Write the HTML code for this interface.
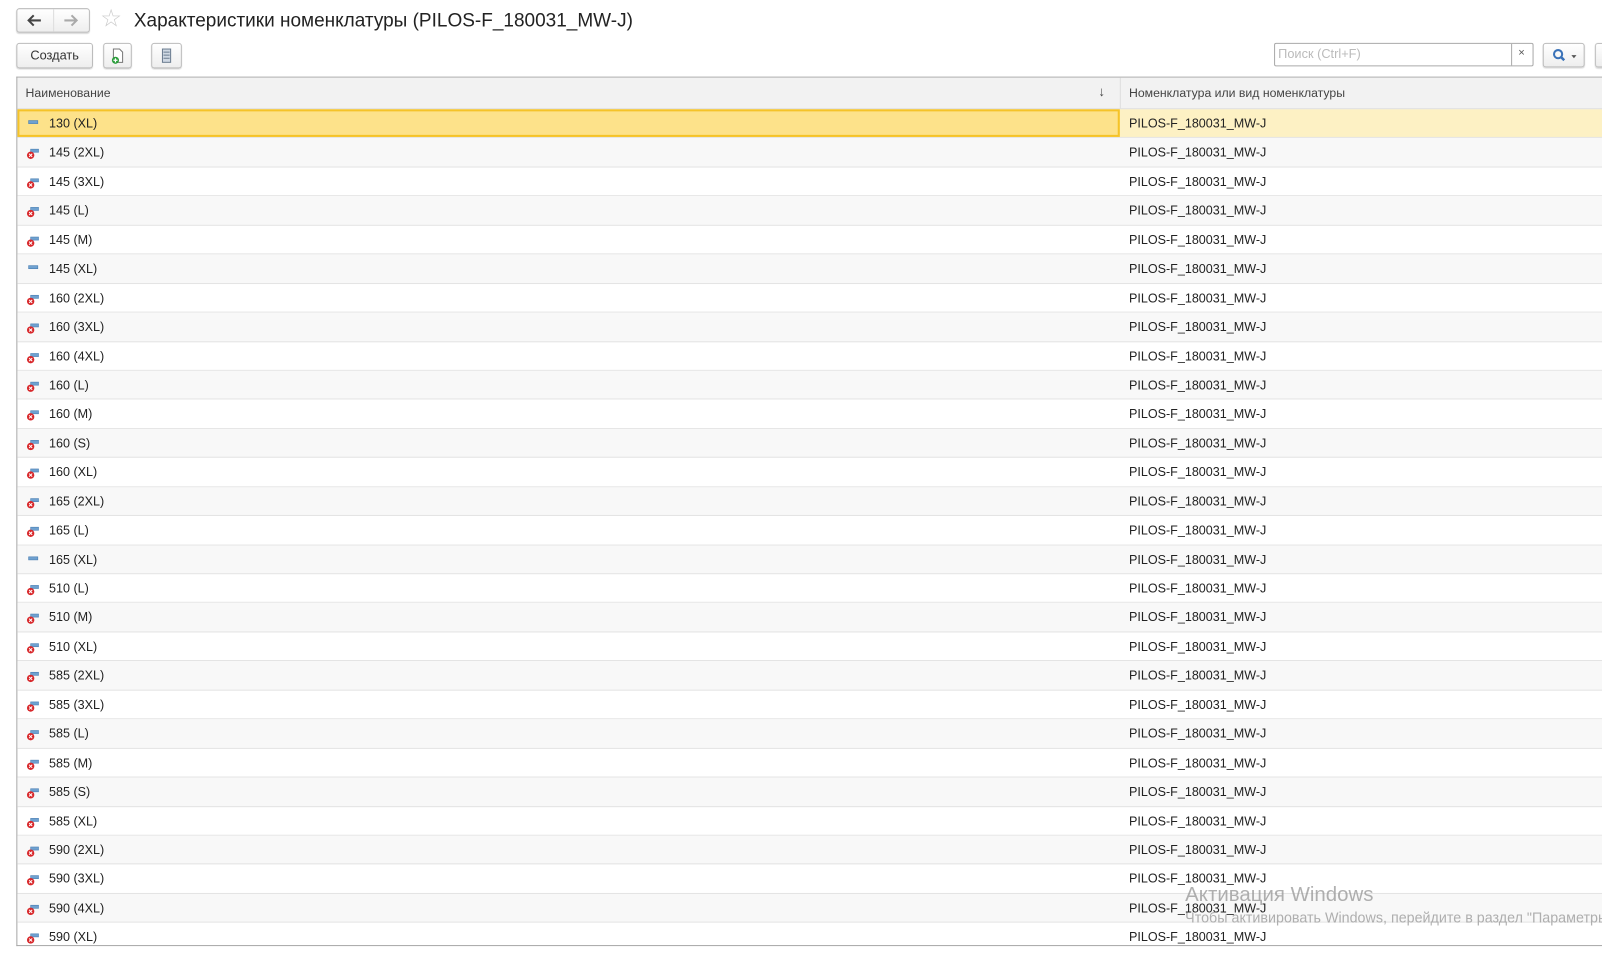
<!DOCTYPE html>
<html><head><meta charset="utf-8"><style>
body{margin:0;width:1602px;height:956px;background:#fff;font-family:"Liberation Sans",Arial,sans-serif;position:relative;overflow:hidden;color:#333}
#wrap{position:absolute;left:0;top:0;width:1568px;height:936px;transform:scale(1.0217);transform-origin:0 0}
.abs{position:absolute}
.btn{position:absolute;border:1px solid #bbb;border-radius:3px;background:linear-gradient(#fff,#eee);box-shadow:0 1px 1px rgba(0,0,0,.15);box-sizing:border-box}
.table{position:absolute;left:16px;top:75px;width:1560px;height:849px;border:1px solid #a8a8a8;border-right:none;overflow:hidden}
.hdr{height:30px;background:#f2f2f2;border-bottom:1px solid #ddd;position:relative;font-size:12px;color:#444}
.row{height:28.45px;position:relative;border-bottom:1px solid #e4e4e4;box-sizing:border-box;font-size:12.3px;color:#222}
.row:nth-child(even){background:#f8f8f8}
.row .n{position:absolute;left:31px;top:7px}
.row .c{position:absolute;left:1088px;top:7px}
.ic{position:absolute;left:9px;top:9px;width:12px;height:12px}
</style></head><body><div id="wrap">
<div class="btn" style="left:16px;top:8px;width:72px;height:24px"></div>
<div class="abs" style="left:52px;top:9px;width:1px;height:22px;background:#ddd"></div>
<svg class="abs" style="left:26px;top:13px" width="16" height="14"><path d="M2 7h12M7 2L2 7l5 5" fill="none" stroke="#444" stroke-width="2"/></svg>
<svg class="abs" style="left:61px;top:13px" width="16" height="14"><path d="M2 7h12M9 2l5 5-5 5" fill="none" stroke="#aaa" stroke-width="2"/></svg>
<div class="abs" style="left:98px;top:4px;font-size:24px;color:#ccc">☆</div>
<div class="abs" style="left:131px;top:9px;font-size:18.6px;color:#222">Характеристики номенклатуры (PILOS-F_180031_MW-J)</div>
<div class="btn" style="left:16px;top:42px;width:75px;height:25px;font-size:12.5px;color:#333;text-align:center;line-height:23px">Создать</div>
<div class="btn" style="left:101px;top:42px;width:28px;height:25px">
<svg width="26" height="23" viewBox="0 0 26 23"><path d="M9 5h6l3 3v10H9z" fill="#fff" stroke="#777"/><circle cx="11" cy="16" r="3.5" fill="#2a9d3a"/><path d="M9 16h4M11 14v4" stroke="#fff" stroke-width="1.2"/></svg></div>
<div class="btn" style="left:148px;top:42px;width:30px;height:25px">
<svg width="28" height="23" viewBox="0 0 28 23"><rect x="10" y="5" width="8" height="13" fill="#cfd8e3" stroke="#6b7c90"/><path d="M11 8h6M11 11h6M11 14h6" stroke="#6b7c90"/></svg></div>
<div class="abs" style="left:1247px;top:42px;width:254px;height:23px;border:1px solid #aaa;border-radius:2px;box-sizing:border-box;font-size:12.5px;color:#bbb;line-height:21px;padding-left:3px">Поиск (Ctrl+F)</div>
<div class="abs" style="left:1479px;top:43px;width:1px;height:21px;background:#aaa"></div>
<div class="abs" style="left:1486px;top:46px;font-size:11px;color:#555">×</div>
<div class="btn" style="left:1510px;top:42px;width:41px;height:24px"><svg width="40" height="22"><circle cx="14" cy="10" r="4" fill="none" stroke="#3a72b8" stroke-width="2"/><path d="M17 13l3 3" stroke="#3a72b8" stroke-width="2.5"/><path d="M27 11h5l-2.5 3z" fill="#555"/></svg></div>
<div class="btn" style="left:1561px;top:42px;width:50px;height:24px"></div>
<div class="table">
<div class="hdr"><span class="abs" style="left:8px;top:8px">Наименование</span><span class="abs" style="left:1058px;top:6px;font-size:13px">↓</span><div class="abs" style="left:1079px;top:0;width:1px;height:30px;background:#ddd"></div><span class="abs" style="left:1088px;top:8px">Номенклатура или вид номенклатуры</span></div>
<div id="rows"></div>
</div>
<div class="abs" style="left:1160px;top:865px;font-size:20px;color:rgba(150,150,150,.75)">Активация Windows</div>
<div class="abs" style="left:1160px;top:890px;font-size:14px;color:rgba(150,150,150,.75);white-space:nowrap">Чтобы активировать Windows, перейдите в раздел "Параметры"</div>
</div>
<script>
var names=["130 (XL)","145 (2XL)","145 (3XL)","145 (L)","145 (M)","145 (XL)","160 (2XL)","160 (3XL)","160 (4XL)","160 (L)","160 (M)","160 (S)","160 (XL)","165 (2XL)","165 (L)","165 (XL)","510 (L)","510 (M)","510 (XL)","585 (2XL)","585 (3XL)","585 (L)","585 (M)","585 (S)","585 (XL)","590 (2XL)","590 (3XL)","590 (4XL)","590 (XL)"];
var dash={"130 (XL)":1,"145 (XL)":1,"165 (XL)":1};
var h="";
names.forEach(function(n,i){
var ic=dash[n]?'<svg class="ic" viewBox="0 0 12 12"><rect x="2" y="2" width="9" height="3" fill="#6fa1d0" stroke="#4a7fb3" stroke-width=".6"/></svg>'
:'<svg class="ic" viewBox="0 0 12 12"><rect x="4" y="2" width="8" height="3" fill="#6fa1d0" stroke="#4a7fb3" stroke-width=".6"/><circle cx="4" cy="8" r="3.6" fill="#d8272a"/><path d="M2.5 6.5l3 3M5.5 6.5l-3 3" stroke="#fff" stroke-width="1"/></svg>';
var st=i==0?' style="background:#fdf1c4"':'';
var hl=i==0?'<div class="abs" style="left:0;top:0;width:1079px;height:27px;background:#fde28a;border:2px solid #f5c328;box-sizing:border-box"></div>':'';
h+='<div class="row"'+st+'>'+hl+ic+'<span class="n">'+n+'</span><span class="c">PILOS-F_180031_MW-J</span></div>';
});
document.getElementById("rows").innerHTML=h;
</script>
</body></html>
